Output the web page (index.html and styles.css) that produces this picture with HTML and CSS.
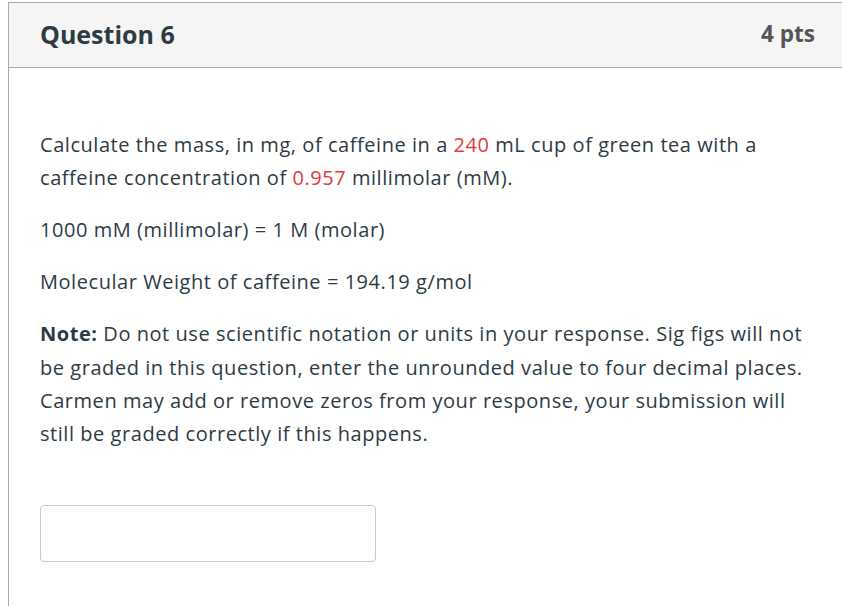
FILE: index.html
```html
<!DOCTYPE html>
<html>
<head>
<meta charset="utf-8">
<link rel="stylesheet" href="styles.css">
</head>
<body>
<div class="question">
  <div class="header">
    <h2 class="title">Question 6</h2>
    <div class="points">4 pts</div>
  </div>
  <div class="content">
    <p>Calculate the mass, in mg, of caffeine in a <span class="red">240</span> mL cup of green tea with a caffeine concentration of <span class="red">0.957</span> millimolar (mM).</p>
    <p>1000 mM (millimolar) = 1 M (molar)</p>
    <p>Molecular Weight of caffeine = 194.19 g/mol</p>
    <p><strong>Note:</strong> Do not use scientific notation or units in your response. Sig figs will not be graded in this question, enter the unrounded value to four decimal places. Carmen may add or remove zeros from your response, your submission will still be graded correctly if this happens.</p>
    <div class="answer"><input class="answer-input" type="text"></div>
  </div>
</div>
</body>
</html>
```

FILE: styles.css
```css
html, body {
  margin: 0;
  padding: 0;
  background: #fff;
  overflow: hidden;
}
body {
  font-family: "Open Sans", Lato, sans-serif;
  color: #2d3b45;
}
.question {
  margin: 2px 0 0 8px;
  border: 1px solid #aaa;
  border-right: 0;
  border-bottom: 0;
  height: 620px;
}
.header {
  display: flex;
  justify-content: space-between;
  align-items: center;
  height: 65px;
  box-sizing: border-box;
  padding: 0 27px 3px 31px;
  background: #f5f5f5;
  border-bottom: 1px solid #aaa;
}
.title {
  margin: 0;
  font-size: 25px;
  font-weight: 700;
  color: #2d3b45;
}
.points {
  font-size: 22.5px;
  font-weight: 700;
  color: #555;
}
.content {
  padding: 60px 26px 0 31px;
  font-size: 20px;
  letter-spacing: 0.55px;
  line-height: 33.4px;
}
.content p {
  margin: 0 0 18.5px 0;
}
.red {
  color: #e0393e;
}
strong {
  font-weight: 700;
}
.answer {
  padding-top: 35.5px;
}
.answer-input {
  display: block;
  box-sizing: border-box;
  width: 336px;
  height: 57px;
  border: 1px solid #c8c8c8;
  border-radius: 4px;
  background: #fff;
  margin: 0;
}
```
